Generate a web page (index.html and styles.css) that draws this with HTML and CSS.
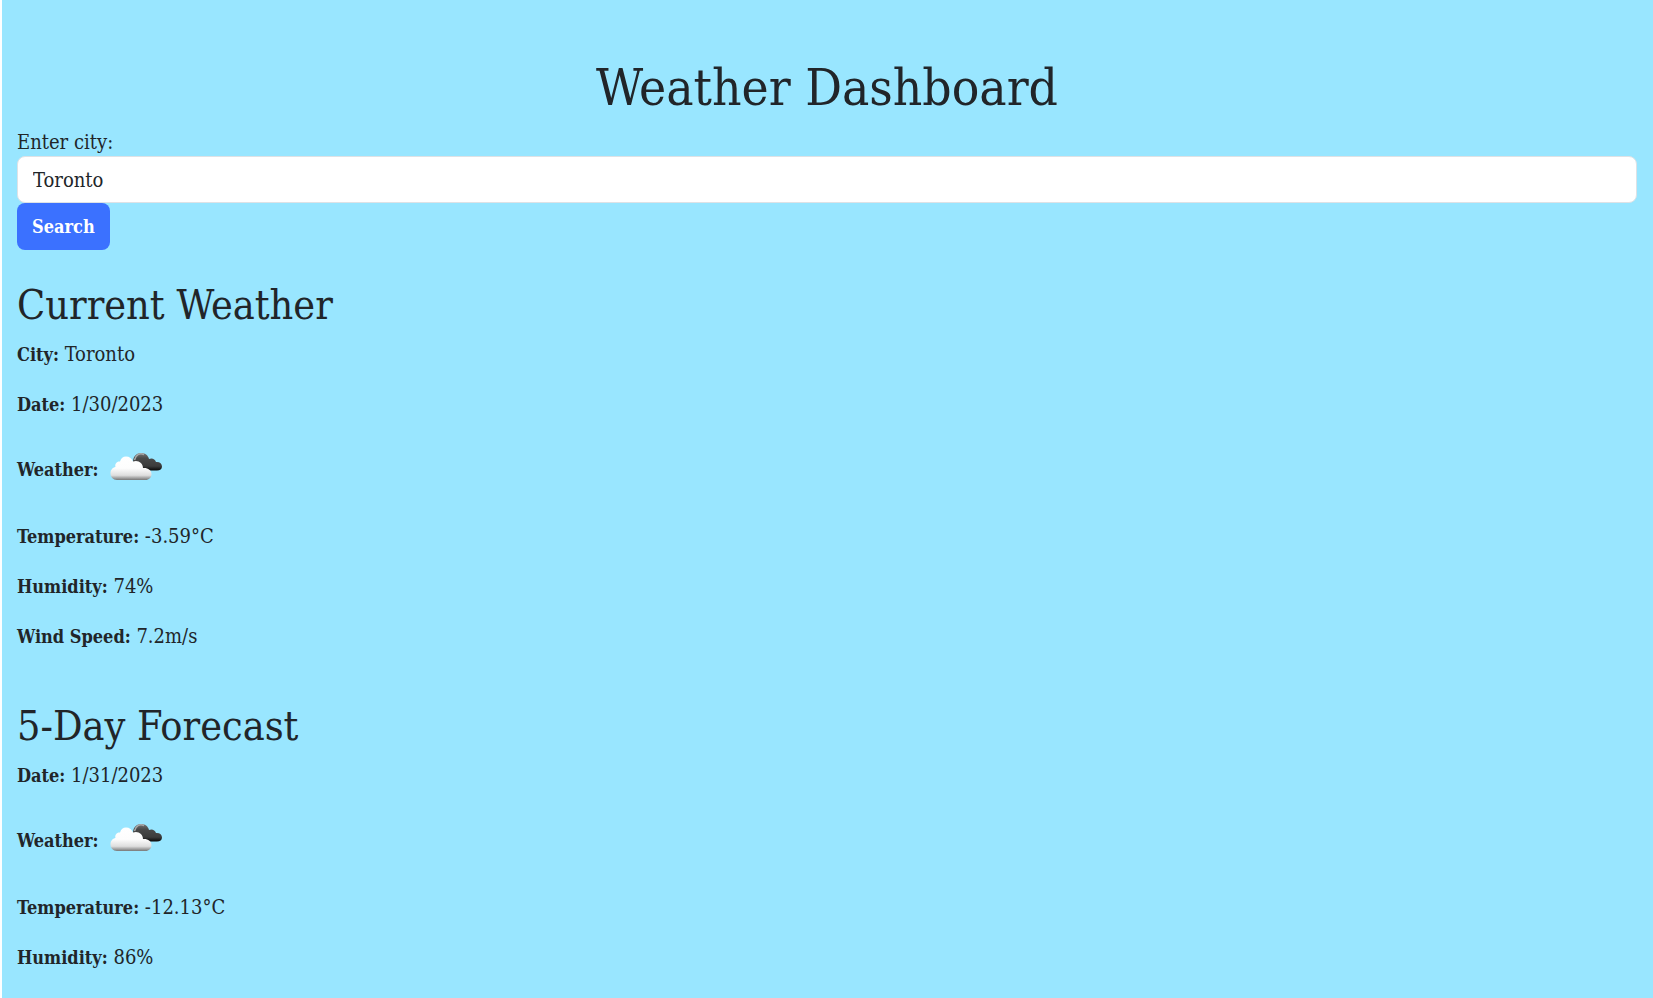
FILE: index.html
```html
<!DOCTYPE html>
<html lang="en">
<head>
<meta charset="utf-8">
<meta name="viewport" content="width=device-width, initial-scale=1">
<title>Weather Dashboard</title>
<link rel="stylesheet" href="styles.css">
</head>
<body>
<svg class="defs" width="0" height="0" aria-hidden="true">
  <defs>
    <linearGradient id="light" x1="0" y1="0" x2="0" y2="1">
      <stop offset="0" stop-color="#ffffff"/>
      <stop offset="0.5" stop-color="#fdfdfd"/>
      <stop offset="0.8" stop-color="#dedede"/>
      <stop offset="0.88" stop-color="#b4b4b4"/>
      <stop offset="1" stop-color="#777777"/>
    </linearGradient>
    <linearGradient id="dark" x1="0" y1="0" x2="0" y2="1">
      <stop offset="0" stop-color="#777777"/>
      <stop offset="0.3" stop-color="#4a4a4a"/>
      <stop offset="0.75" stop-color="#3c3c3c"/>
      <stop offset="1" stop-color="#080808"/>
    </linearGradient>
    <symbol id="clouds" viewBox="0 0 62 62">
      <path fill="url(#dark)" d="M29 23 C29 17 33 14 37 14 C41 14 44 16 45 20 C48 18.500 51 20 52 23 C55.500 22.500 58 24.500 58 27.500 C58 30 56 31.500 53 31.500 H37 Z"/>
      <path fill="none" stroke="#a9a9a9" stroke-width="1.500" d="M30.500 21 C32 15.500 36 13.500 40 15.500"/>
      <path fill="url(#light)" d="M13 41 C9 41 6.500 38 6.500 34.500 C6.500 31 8.500 28.500 11.500 28 C10.500 25 13 22 16 22.500 C17 19 19 17.500 22 17.500 C25.500 17.500 28 19.500 29 22.500 C34 20.500 39 24 39 29 C43.500 28.500 47.500 31 47.500 35 C47.500 38.500 45 41 41.500 41 Z"/>
    </symbol>
  </defs>
</svg>
<main class="page">
  <h1 class="title">Weather Dashboard</h1>
  <form class="search">
    <label class="search-label" for="city">Enter city:</label>
    <input class="search-input" id="city" type="text" value="Toronto">
    <button class="search-button" type="button">Search</button>
  </form>
  <section class="report">
    <h2 class="heading">Current Weather</h2>
    <p class="line"><strong>City:</strong> Toronto</p>
    <p class="line"><strong>Date:</strong> 1/30/2023</p>
    <p class="line"><strong>Weather:</strong> <svg class="icon" role="img" aria-label="Broken clouds"><use href="#clouds"/></svg></p>
    <p class="line"><strong>Temperature:</strong> -3.59°C</p>
    <p class="line"><strong>Humidity:</strong> 74%</p>
    <p class="line"><strong>Wind Speed:</strong> 7.2m/s</p>
  </section>
  <section class="report">
    <h2 class="heading">5-Day Forecast</h2>
    <p class="line"><strong>Date:</strong> 1/31/2023</p>
    <p class="line"><strong>Weather:</strong> <svg class="icon" role="img" aria-label="Broken clouds"><use href="#clouds"/></svg></p>
    <p class="line"><strong>Temperature:</strong> -12.13°C</p>
    <p class="line"><strong>Humidity:</strong> 86%</p>
  </section>
</main>
</body>
</html>
```

FILE: styles.css
```css
*, *::before, *::after { box-sizing: border-box; }

body {
  margin: 0;
  border-left: 2px solid #ffffff;
  background: #99e6ff;
  color: #212529;
  font-family: "Roboto Slab", "DejaVu Serif Condensed", "DejaVu Serif", serif;
  font-size: 20px;
  line-height: 30px;
}

.defs { display: block; }

.page {
  min-height: 100vh;
  padding: 58px 16px 0 15px;
}

.title {
  margin: 0 0 10px;
  font-size: 51px;
  font-weight: 400;
  line-height: 60px;
  text-align: center;
}

.search {
  display: flex;
  flex-direction: column;
  align-items: flex-start;
}

.search-label { line-height: 28px; }

.search-input {
  width: 100%;
  height: 47px;
  padding: 0 15px;
  border: 1px solid #dee2e6;
  border-radius: 8px;
  background: #ffffff;
  color: inherit;
  font: inherit;
}

.search-button {
  height: 47px;
  padding: 0 15px;
  border: 0;
  border-radius: 8px;
  background: #3b71ff;
  color: #ffffff;
  font: inherit;
  font-size: 18px;
  font-weight: 700;
}

.report { padding-top: 31px; }

.heading {
  margin: 0 0 10px;
  font-size: 41px;
  font-weight: 400;
  line-height: 48px;
}

.line { margin: 0 0 20px; }

.line strong {
  font-size: 18px;
  line-height: 20px;
}

.icon {
  width: 62px;
  height: 62px;
  vertical-align: middle;
}
```
